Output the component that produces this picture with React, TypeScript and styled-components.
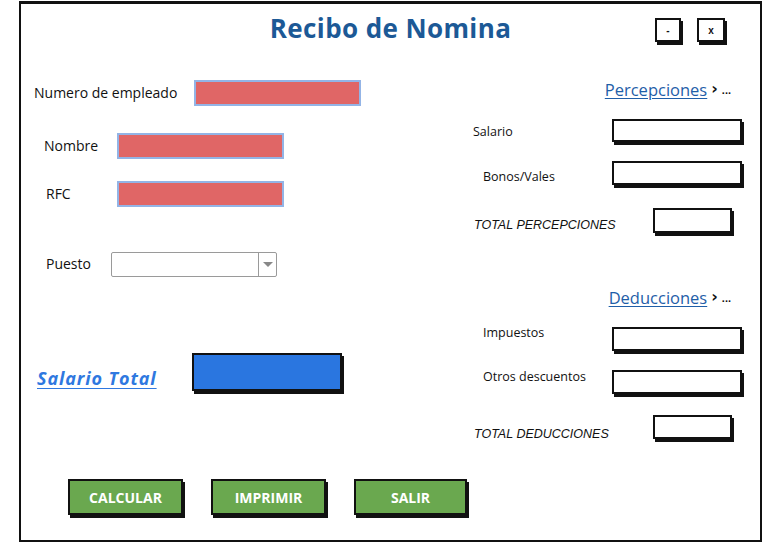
import React from "react";
import styled, { createGlobalStyle } from "styled-components";

const Global = createGlobalStyle`
  html, body { margin: 0; padding: 0; background: #fff; }
  body { font-family: "Open Sans", "Liberation Sans", sans-serif; color: #111; }
`;

const Window = styled.div`
  box-sizing: border-box;
  margin: 1px 0 0 19px;
  width: 743px;
  height: 541px;
  border: 2px solid #111;
  border-top-width: 3px;
  display: flex;
  flex-direction: column;
  background: #fff;
`;

const Header = styled.div`
  height: 48px;
  display: grid;
  grid-template-columns: 1fr auto 1fr;
  align-items: center;
`;

const Title = styled.h1`
  grid-column: 2;
  margin: 0;
  font-family: "Open Sans", sans-serif;
  font-weight: 700;
  font-size: 26px;
  letter-spacing: 0.4px;
  color: #1c5996;
`;

const WinButtons = styled.div`
  grid-column: 3;
  justify-self: end;
  display: flex;
  gap: 16px;
  padding-right: 35px;
  padding-top: 4px;
`;

const WinButton = styled.div<{ $w: number }>`
  box-sizing: border-box;
  width: ${(p) => p.$w}px;
  height: 24px;
  border: 2px solid #111;
  box-shadow: 2px 3px 0 #111;
  display: flex;
  align-items: center;
  justify-content: center;
  font-family: "Liberation Sans", sans-serif;
  font-size: 10px;
  font-weight: 700;
`;

const Main = styled.div`
  flex: 1;
  display: grid;
  grid-template-columns: 452px 1fr;
`;

const Column = styled.div`
  display: flex;
  flex-direction: column;
`;

const LeftRow = styled.div<{ $top: number; $indent: number; $labelW: number; $align?: string }>`
  display: grid;
  grid-template-columns: ${(p) => p.$labelW}px auto;
  align-items: ${(p) => p.$align || "center"};
  margin-top: ${(p) => p.$top}px;
  padding-left: ${(p) => p.$indent}px;
`;

const Label = styled.span<{ $size?: number }>`
  font-family: "Open Sans", sans-serif;
  font-size: ${(p) => p.$size || 14}px;
  line-height: 18px;
  padding-bottom: 1px;
  color: #111;
  white-space: nowrap;
`;

const RedInput = styled.div`
  box-sizing: border-box;
  width: 167px;
  height: 26px;
  background: #e06666;
  border: 2px solid #93b4e6;
`;

const Select = styled.div`
  box-sizing: border-box;
  width: 166px;
  height: 25px;
  border: 1px solid #9a9a9a;
  border-radius: 2px;
  display: flex;
  justify-content: flex-end;
`;

const SelectArrow = styled.div`
  width: 17px;
  border-left: 1px solid #9a9a9a;
  display: flex;
  align-items: center;
  justify-content: center;
  &::after {
    content: "";
    border-left: 5px solid transparent;
    border-right: 5px solid transparent;
    border-top: 5px solid #888;
  }
`;

const TotalLink = styled.span`
  font-family: "Open Sans", sans-serif;
  font-size: 18px;
  font-weight: 700;
  font-style: italic;
  letter-spacing: 0.9px;
  color: #2f78e0;
  text-decoration: underline;
  text-underline-offset: 3px;
  padding-bottom: 1px;
`;

const BlueBox = styled.div`
  box-sizing: border-box;
  width: 150px;
  height: 38px;
  background: #2a76e0;
  border: 2px solid #111;
  box-shadow: 2px 3px 0 #111;
`;

const SectionHead = styled.div<{ $top: number }>`
  margin-top: ${(p) => p.$top}px;
  align-self: flex-end;
  padding-right: 29px;
  display: flex;
  align-items: center;
  gap: 4px;
  height: 20px;
`;

const SectionLink = styled.span`
  font-family: "Open Sans", sans-serif;
  font-size: 16.5px;
  color: #1f5ea8;
  text-decoration: underline;
  text-underline-offset: 2px;
`;

const Chevron = styled.span`
  font-family: "DejaVu Sans", sans-serif;
  font-size: 16px;
  font-weight: 700;
  color: #111;
  line-height: 1;
`;

const Dots = styled.span`
  font-family: "Liberation Sans", sans-serif;
  font-size: 11px;
  font-weight: 700;
  color: #111;
  padding-top: 2px;
`;

const RightRow = styled.div<{ $top: number; $indent: number; $labelW: number }>`
  display: grid;
  grid-template-columns: ${(p) => p.$labelW}px auto;
  align-items: start;
  margin-top: ${(p) => p.$top}px;
  padding-left: ${(p) => p.$indent}px;
`;

const RLabel = styled.span<{ $shift: number; $size?: number }>`
  margin-top: ${(p) => p.$shift}px;
  font-family: "Open Sans", sans-serif;
  font-size: ${(p) => p.$size || 12.5}px;
  line-height: 16px;
  color: #111;
  white-space: nowrap;
`;

const TotalLabel = styled.span<{ $shift: number }>`
  margin-top: ${(p) => p.$shift}px;
  font-family: "Liberation Sans", sans-serif;
  font-style: italic;
  font-size: 12.5px;
  line-height: 16px;
  color: #111;
  white-space: nowrap;
`;

const OutBox = styled.div<{ $w: number; $h: number }>`
  box-sizing: border-box;
  width: ${(p) => p.$w}px;
  height: ${(p) => p.$h}px;
  border: 2px solid #111;
  box-shadow: 2px 3px 0 #111;
  background: #fff;
`;

const Footer = styled.div`
  display: flex;
  gap: 28px;
  padding: 0 0 25px 47px;
`;

const GreenButton = styled.div<{ $w: number }>`
  box-sizing: border-box;
  width: ${(p) => p.$w}px;
  height: 36px;
  background: #6aa84f;
  border: 2px solid #111;
  box-shadow: 2px 3px 0 #111;
  color: #fff;
  display: flex;
  align-items: center;
  justify-content: center;
  font-family: "Open Sans", sans-serif;
  font-weight: 700;
  font-size: 14px;
`;

export default function App() {
  return (
    <>
      <Global />
      <Window>
        <Header>
          <Title>Recibo de Nomina</Title>
          <WinButtons>
            <WinButton $w={26}>-</WinButton>
            <WinButton $w={28}>x</WinButton>
          </WinButtons>
        </Header>
        <Main>
          <Column>
            <LeftRow $top={28} $indent={13} $labelW={160}>
              <Label>Numero de empleado</Label>
              <RedInput />
            </LeftRow>
            <LeftRow $top={27} $indent={23} $labelW={73}>
              <Label>Nombre</Label>
              <RedInput />
            </LeftRow>
            <LeftRow $top={22} $indent={25} $labelW={71}>
              <Label>RFC</Label>
              <RedInput />
            </LeftRow>
            <LeftRow $top={45} $indent={25} $labelW={65}>
              <Label>Puesto</Label>
              <Select>
                <SelectArrow />
              </Select>
            </LeftRow>
            <LeftRow $top={76} $indent={16} $labelW={155} $align="end">
              <TotalLink>Salario Total</TotalLink>
              <BlueBox />
            </LeftRow>
          </Column>
          <Column>
            <SectionHead $top={27}>
              <SectionLink>Percepciones</SectionLink>
              <Chevron>›</Chevron>
              <Dots>...</Dots>
            </SectionHead>
            <RightRow $top={20} $indent={0} $labelW={139}>
              <RLabel $shift={5}>Salario</RLabel>
              <OutBox $w={130} $h={23} />
            </RightRow>
            <RightRow $top={19} $indent={10} $labelW={129}>
              <RLabel $shift={8}>Bonos/Vales</RLabel>
              <OutBox $w={130} $h={24} />
            </RightRow>
            <RightRow $top={23} $indent={1} $labelW={179}>
              <TotalLabel $shift={9}>TOTAL PERCEPCIONES</TotalLabel>
              <OutBox $w={79} $h={25} />
            </RightRow>
            <SectionHead $top={54}>
              <SectionLink>Deducciones</SectionLink>
              <Chevron>›</Chevron>
              <Dots>...</Dots>
            </SectionHead>
            <RightRow $top={20} $indent={10} $labelW={129}>
              <RLabel $shift={-2}>Impuestos</RLabel>
              <OutBox $w={130} $h={24} />
            </RightRow>
            <RightRow $top={19} $indent={10} $labelW={129}>
              <RLabel $shift={-1}>Otros descuentos</RLabel>
              <OutBox $w={130} $h={24} />
            </RightRow>
            <RightRow $top={21} $indent={1} $labelW={179}>
              <TotalLabel $shift={11}>TOTAL DEDUCCIONES</TotalLabel>
              <OutBox $w={79} $h={24} />
            </RightRow>
          </Column>
        </Main>
        <Footer>
          <GreenButton $w={115}>CALCULAR</GreenButton>
          <GreenButton $w={115}>IMPRIMIR</GreenButton>
          <GreenButton $w={113}>SALIR</GreenButton>
        </Footer>
      </Window>
    </>
  );
}
